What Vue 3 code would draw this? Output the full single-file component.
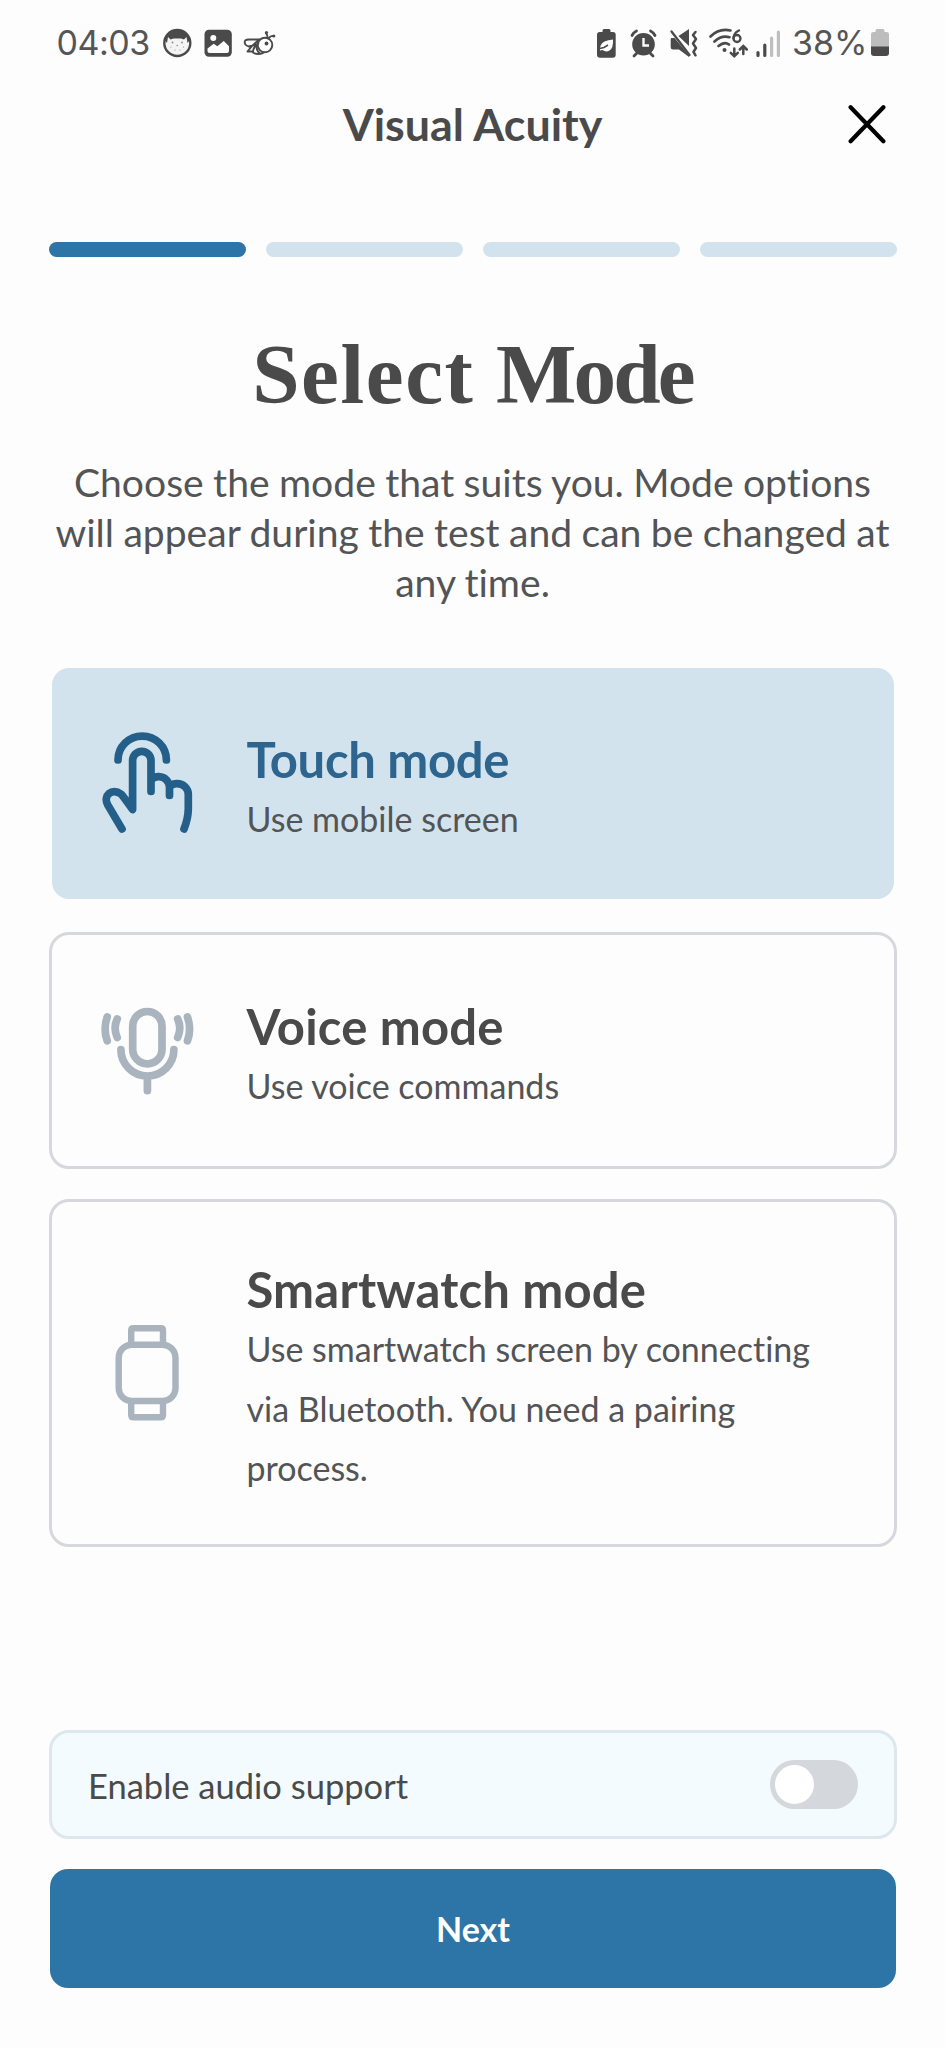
<script setup>
import { ref } from 'vue'

const steps = [1, 2, 3, 4]
const currentStep = ref(1)
const selected = ref('touch')
const audio = ref(false)

const modes = [
  { id: 'touch', title: 'Touch mode', text: 'Use mobile screen' },
  { id: 'voice', title: 'Voice mode', text: 'Use voice commands' },
  { id: 'watch', title: 'Smartwatch mode', text: 'Use smartwatch screen by connecting via Bluetooth. You need a pairing process.' }
]
</script>

<template>
  <div class="screen">
    <div class="status">
      <span class="clock">04:03</span>
      <svg class="status-left" width="125" height="38" viewBox="0 0 125 38">
        <!-- avatar -->
        <circle cx="22.3" cy="18" r="13" fill="#f4f4f4" stroke="#4a4a4a" stroke-width="2.4" />
        <path d="M9.500 15C11 8 16 4.800 22.300 4.800S33.500 8 35 15l-2.500 3-1-6-2.500 2.500-3-1h-7.500l-3 1-2.500-2.500-1 6z" fill="#4a4a4a" />
        <g fill="#8a8a8a">
          <circle cx="17.500" cy="17.500" r=".9" /><circle cx="27" cy="17.500" r=".9" /><circle cx="22.300" cy="20.500" r=".8" />
          <circle cx="16" cy="22" r=".6" /><circle cx="28.500" cy="22" r=".6" /><circle cx="20" cy="25" r=".6" /><circle cx="25" cy="25" r=".6" />
        </g>
        <!-- gallery -->
        <rect x="49.500" y="4.800" width="27.300" height="27" rx="4.500" fill="#4a4a4a" />
        <circle cx="58.300" cy="13" r="3" fill="#fdfdfd" />
        <path d="M52.500 26v-2.500l6.200-4.700 3.600 2.500 6.500-5.300 5.200 5.200V26q0 2-2 2H54.500q-2 0-2-2z" fill="#fdfdfd" />
        <!-- bee -->
        <g fill="none" stroke="#4a4a4a" stroke-width="1.900" stroke-linecap="round" stroke-linejoin="round">
          <circle cx="110" cy="20" r="7.300" />
          <path d="M105 14.500H93.500Q89.500 14.500 89.700 17.500T94 21.500L103 19M105 14.500Q99 18 92.500 26.500H98M103.500 18Q98 22 98 27.500q4 2.700 10 .5M101.500 20q-.5 5 3 8M112.500 12.500Q112.500 9.500 111 8.500M114 13Q115.500 10.500 118.500 11" />
        </g>
        <circle cx="111.500" cy="7.500" r="1.600" fill="#4a4a4a" /><circle cx="118.800" cy="11" r="1.600" fill="#4a4a4a" /><circle cx="111.500" cy="18.500" r="1.900" fill="#4a4a4a" />
      </svg>
      <svg class="status-right" width="205" height="40" viewBox="0 0 205 40">
        <!-- battery saver -->
        <path d="M6.500 4.500Q6.500 3 8 3h5q1.500 0 1.500 1.500V6H17q2.700 0 2.700 2.700v20.100q0 3-3 3H4q-3 0-3-3V8.700Q1 6 3.700 6h2.800z" fill="#4a4a4a" />
        <path d="M4 24.500Q3.500 18 8.500 15.500 12 14 17 13.500 17.500 22 13.500 24.500 10 26.500 6.500 24z" fill="#fdfdfd" />
        <path d="M2.500 22.800 8 21.500l4-2.500" fill="none" stroke="#4a4a4a" stroke-width="1.500" />
        <!-- alarm -->
        <circle cx="47.500" cy="18.300" r="11.300" fill="#4a4a4a" />
        <path d="M36 9.500Q37.500 6.500 40.500 5M54.500 5Q57.500 6.500 59 9.500M40.500 27.500 38 30M54.500 27.500 57 30" fill="none" stroke="#4a4a4a" stroke-width="2.800" stroke-linecap="round" />
        <path d="M47.500 12v7.500H53" fill="none" stroke="#fdfdfd" stroke-width="2.400" />
        <!-- mute and vibrate -->
        <path d="M75 12h3.500L93 29.500V31L83 23.500h-6q-2.300 0-2.300-2.300V14zM82.500 10 93 3v17z" fill="#4a4a4a" />
        <path d="M75.500 5.500 93.500 29" stroke="#4a4a4a" stroke-width="2.300" stroke-linecap="round" />
        <path d="M98.500 6l-2.500 3 3 4-3 4.500 3 4.500-2.500 3.800 2 3.500" transform="translate(1)" fill="none" stroke="#4a4a4a" stroke-width="2.500" stroke-linecap="round" stroke-linejoin="round" />
        <!-- wifi -->
        <g fill="none" stroke="#4a4a4a" stroke-width="2.700" stroke-linecap="round">
          <path d="M114.500 10.500Q123 2 134.500 4.500M118.500 15.500Q125.500 9 133.500 11.200M122.500 20Q128.500 15 133 18.500" />
          <path d="M138.300 22.500V30M134.800 26.800l3.500 3.500 3.500-3.500M147.300 28v-7.500M143.800 23.500l3.500-3.500 3.500 3.500" stroke-width="2.500" />
          <path d="M143 4.500Q137.500 7 137.500 12.500" stroke-width="2.300" />
          <circle cx="141" cy="12.500" r="3.500" stroke-width="2.300" />
        </g>
        <circle cx="128.500" cy="24" r="2" fill="#4a4a4a" />
        <!-- signal -->
        <g stroke-width="3.200" stroke-linecap="round">
          <path d="M162 26.500v3M168.800 19v10.500" stroke="#4a4a4a" />
          <path d="M175.600 12v17.500M182.400 6v23.500" stroke="#bebebe" />
        </g>
      </svg>
      <span class="percent">38%</span>
      <svg class="battery" width="18" height="27" viewBox="0 0 18 27">
        <path d="M4.500 1.500Q4.500 0 6 0h6q1.500 0 1.500 1.500V3H15.500Q18 3 18 5.500V18H0V5.500Q0 3 2.500 3h2z" fill="#bdbdbd" />
        <path d="M0 17.500h18V24q0 3-3 3H3q-3 0-3-3z" fill="#4a4a4a" />
      </svg>
    </div>

    <header class="header">
      <h2 class="name">Visual Acuity</h2>
      <button class="close" aria-label="Close">
        <svg width="40" height="40" viewBox="0 0 40 40"><path d="M3.600 3.200 36.400 37.200M36.400 3.200 3.600 37.200" stroke="#000" stroke-width="4.200" stroke-linecap="round" /></svg>
      </button>
    </header>

    <div class="progress">
      <span v-for="s in steps" :key="s" class="step" :class="{ on: s <= currentStep }"></span>
    </div>

    <h1 class="heading"><span class="wide">Select</span> <span class="tight">Mode</span></h1>
    <p class="lead">Choose the mode that suits you. Mode options will appear during the test and can be changed at any time.</p>

    <div class="modes">
      <div v-for="m in modes" :key="m.id" class="card" :class="[m.id, { selected: selected === m.id }]" @click="selected = m.id">
        <svg v-if="m.id === 'touch'" class="icon" viewBox="0 3.500 120 120">
          <path d="M28 39.500a24.200 23.900 0 0 1 48.400 0" />
          <path d="M32 108.500 17.800 84.500C12.500 75 22 67 31 73.500Q33 75.500 42.600 89V40a9.200 9.200 0 0 1 18.400 0V71V59.500Q64.500 56 69 56.200C75 56.500 79.500 61 79.500 67V75V67Q81 63.500 86.500 63.200C93.500 63 98.300 68 98.300 74V88Q98.300 97.500 94 108.500" />
        </svg>
        <svg v-else-if="m.id === 'voice'" class="icon" viewBox="0 -9.500 120 120">
          <rect x="42.700" y="11" width="29.300" height="52.300" rx="14.650" />
          <path d="M30.900 49a26.500 26.500 0 0 0 53 0M57.400 76V90.200M27.200 18.500Q23 27.500 27.200 37M17.200 16.500Q13 28.500 17.200 40.300M87.700 18.500Q91.900 27.500 87.700 37M97.500 16.500Q101.700 28.500 97.500 40.300" />
        </svg>
        <svg v-else class="icon" viewBox="-10 3 120 120">
          <path d="M31.200 34V20.500Q31.200 18.300 33.400 18.300H60.800Q63 18.300 63 20.500V34M31.200 92V105Q31.200 107.300 33.400 107.300H60.800Q63 107.300 63 105V92" stroke-width="6.400" />
          <rect x="18.700" y="34.800" width="56.800" height="56.200" rx="13" stroke-width="6.400" />
        </svg>
        <div class="body">
          <h3 class="title">{{ m.title }}</h3>
          <p class="text">{{ m.text }}</p>
        </div>
      </div>
    </div>

    <div class="audio">
      <span class="audio-label">Enable audio support</span>
      <button class="toggle" :class="{ active: audio }" aria-label="Audio support" @click="audio = !audio"><i class="knob"></i></button>
    </div>
    <button class="next">Next</button>
  </div>
</template>

<style>
body { margin: 0; background: #fdfdfd; }
</style>

<style scoped>
.screen {
  box-sizing: border-box;
  width: 945px;
  height: 2048px;
  padding: 0 48.500px;
  display: flex;
  flex-direction: column;
  overflow: hidden;
  background: #fdfdfd;
  color: #4a4a4a;
  font-family: Lato, "Liberation Sans", sans-serif;
  font-variant-ligatures: none;
}
h1, h2, h3, p { margin: 0; }
button { border: 0; padding: 0; background: none; font-family: inherit; }
svg { display: block; flex: none; }

.status { display: flex; height: 64px; margin: 22px -48.500px 0; padding-left: 56.500px; font-family: Inter, "Liberation Sans", sans-serif; }
.clock, .percent { font-size: 34px; line-height: 42px; height: 42px; color: #555; white-space: nowrap; }
.clock { width: 98.500px; letter-spacing: -.5px; }
.status-left { margin-top: 3px; }
.status-right { margin: 4px 0 0 316px; }
.percent { margin-left: -9px; width: 79px; }
.battery { margin-top: 7px; }

.header { display: flex; align-items: center; justify-content: center; height: 76px; position: relative; }
.name { font-size: 44.800px; line-height: 60px; font-weight: 700; }
.close { position: absolute; right: 9.500px; top: 17.500px; }

.progress { display: grid; grid-template-columns: repeat(4, 1fr); gap: 20px; margin-top: 80px; }
.step { height: 15px; border-radius: 7.500px; background: #d3e3ed; }
.step.on { background: #2d75a7; }

.heading { margin-top: 67px; font: 700 85.200px/100px "Liberation Serif", serif; text-align: center; white-space: nowrap; }
.wide { letter-spacing: 1.600px; }
.tight { letter-spacing: -2.800px; }
.lead { margin: 32.500px -10px 0; padding: 0 10px; font-size: 39.100px; line-height: 50px; text-align: center; color: #525456; word-spacing: -.6px; }

.modes { display: flex; flex-direction: column; gap: 30px; margin-top: 58.500px; }
.card {
  box-sizing: border-box;
  display: flex;
  align-items: center;
  gap: 37px;
  height: 237px;
  padding: 0 38px;
  border: 3px solid #d6d8dd;
  border-radius: 20px;
}
.card.watch { height: 348px; }
.card.selected { border-color: transparent; background: #d3e3ed; background-clip: padding-box; }
.icon { width: 120px; height: 120px; fill: none; stroke: #a9b4be; stroke-width: 7.700; stroke-linecap: round; stroke-linejoin: round; }
.selected .icon { stroke: #245f89; }
.body { flex: 1; padding-top: 11px; }
.title { font-size: 49px; line-height: 60px; font-weight: 700; letter-spacing: .2px; }
.touch .title { letter-spacing: -.3px; }
.selected .title { color: #2d658e; }
.text { font-size: 34px; line-height: 59.500px; color: #525456; }
.watch .text { width: 590px; }

.audio {
  box-sizing: border-box;
  display: flex;
  align-items: center;
  justify-content: space-between;
  height: 109px;
  margin-top: 183px;
  padding: 0 36px 0 36.500px;
  border: 3px solid #dce8ee;
  border-radius: 20px;
  background: #f4fbff;
  font-size: 34.500px;
  line-height: 60px;
}
.audio-label { padding-top: 2px; }
.toggle { display: flex; align-items: center; width: 88px; height: 49px; padding: 0 5px; border-radius: 25px; background: #d4d7dc; }
.toggle.active { justify-content: flex-end; background: #2d75a7; }
.knob { width: 39px; height: 39px; border-radius: 50%; background: #fff; }
.next { flex: none; height: 119px; margin: 30px 1px 0; padding-left: 1px; border-radius: 18px; background: #2d75a7; color: #fff; font-size: 34px; font-weight: 700; }
</style>
